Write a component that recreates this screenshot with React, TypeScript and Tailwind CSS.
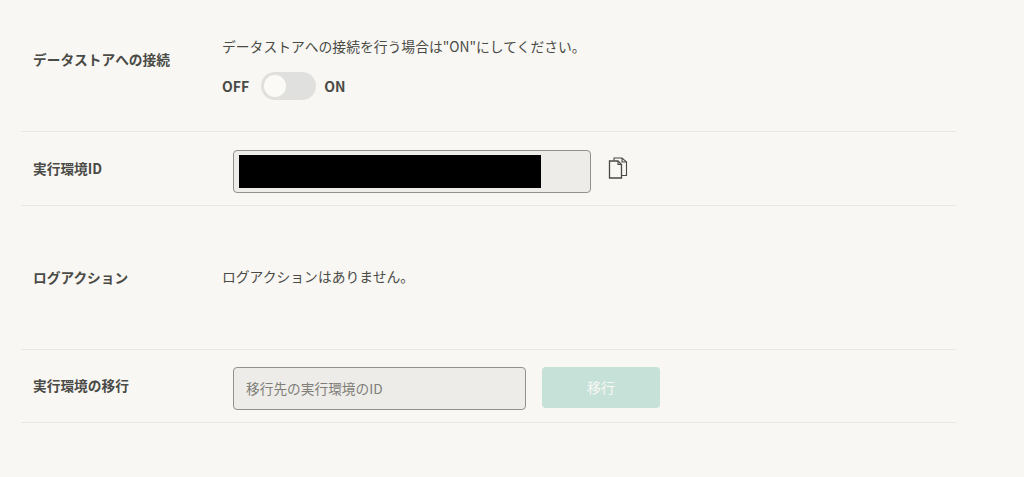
const font = { fontFamily: '"Noto Sans CJK JP", "Noto Sans", sans-serif' };

const labelClass = "w-[201px] shrink-0 pl-3 text-[13.7px] font-bold text-[#4a4a46]";

const CopyIcon = () => (
	<svg width="20" height="22" viewBox="0 0 20 22" fill="none" stroke="#4a4944" strokeWidth="1.1">
		<path d="M6 1h8l4.5 4v13h-5.5V1" fill="#f8f7f3" stroke="none" />
		<path d="M6 3.5V1h8l4.5 4v13.5H14" />
		<path d="M14 1v4h4.5" />
		<path d="M1.5 4h8.5l3.5 3.5v13.5h-12z" fill="#f8f7f3" strokeWidth="1.3" />
		<path d="M10 4v3.5h3.5" />
	</svg>
);

export default function App() {
	return (
		<div className="h-[477px] w-[1024px] overflow-hidden bg-[#f8f7f3] pl-[21px]" style={font}>
			<div className="w-[935px]">
				{/* Data store connection */}
				<div className="flex h-[132px] border-b border-[#e8e7e3]">
					<div className={`${labelClass} pt-[49px] leading-[21px]`}>データストアへの接続</div>
					<div className="pt-[36px]">
						<p className="text-[13.8px] leading-[21px] text-[#4a4a46]">
							データストアへの接続を行う場合は"ON"にしてください。
						</p>
						<div className="mt-[15px] flex h-[28px] items-center text-[14px] font-bold text-[#4a4a46]">
							<span>OFF</span>
							<span className="ml-[12px] flex h-[28px] w-[55px] items-center rounded-full bg-[#e0e0de] pl-[3px]">
								<span className="h-[22px] w-[22px] rounded-full bg-[#fbfaf7]" />
							</span>
							<span className="ml-[8px]">ON</span>
						</div>
					</div>
				</div>

				{/* Execution environment ID */}
				<div className="flex h-[74px] items-center border-b border-[#e8e7e3]">
					<div className={labelClass}>実行環境ID</div>
					<div className="ml-[11px] mt-[6px] flex h-[43px] w-[358px] items-center rounded-[4px] border border-[#92918c] bg-[#edece8] pl-[5px]">
						<div className="h-[33px] w-[302px] bg-black" />
					</div>
					<div className="ml-[17px] -mt-[1px]">
						<CopyIcon />
					</div>
				</div>

				{/* Log action */}
				<div className="flex h-[144px] items-center border-b border-[#e8e7e3]">
					<div className={labelClass}>ログアクション</div>
					<p className="-mt-[2px] text-[13.8px] text-[#4a4a46]">ログアクションはありません。</p>
				</div>

				{/* Move execution environment */}
				<div className="flex h-[73px] items-center border-b border-[#e8e7e3]">
					<div className={`${labelClass} -mt-[2px]`}>実行環境の移行</div>
					<input
						disabled
						placeholder="移行先の実行環境のID"
						className="ml-[11px] mt-[4px] h-[43px] w-[293px] rounded-[4px] border border-[#92918c] bg-[#edece8] px-3 text-[13.7px] placeholder:text-[#7f7e79]"
					/>
					<button className="ml-[16px] mt-[2px] h-[41px] w-[118px] rounded-[4px] bg-[#c6e2d8] text-[14px] font-normal text-[#f8f7f3]">
						移行
					</button>
				</div>
			</div>
		</div>
	);
}
